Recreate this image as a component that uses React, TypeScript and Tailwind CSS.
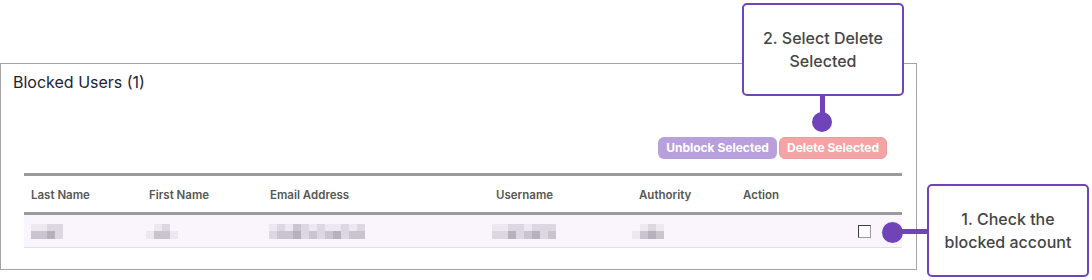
import React from "react";

const shades: Record<string, string> = {
  a: "bg-[#ece8f0]",
  b: "bg-[#dcd7e1]",
  c: "bg-[#c9c4cf]",
  d: "bg-[#b6b1bc]",
};

// blurred (pixelated) cell value, two rows of blocks
const Pixelated = ({ top, bottom, className = "" }: { top: string; bottom: string; className?: string }) => {
  return (
    <div className={"flex flex-col " + className}>
      <div className="flex">
        {top.split("").map((s, i) => (
          <div key={i} className={"w-[8px] h-[7px] " + (shades[s] ?? "bg-transparent")} />
        ))}
      </div>
      <div className="flex">
        {bottom.split("").map((s, i) => (
          <div key={i} className={"w-[8px] h-[8px] " + (shades[s] ?? "bg-transparent")} />
        ))}
      </div>
    </div>
  );
};

const columns = ["Last Name", "First Name", "Email Address", "Username", "Authority", "Action"];

const Callout = ({ text, className }: { text: React.ReactNode; className: string }) => (
  <div
    className={
      "absolute flex items-center justify-center text-center rounded-[5px] border-2 border-[#7043b9] bg-white text-[16px] font-medium leading-[23px] text-[#454545] " +
      className
    }
  >
    {text}
  </div>
);

export default function App() {
  return (
    <div
      className="relative w-[1092px] h-[280px] bg-white overflow-hidden"
      style={{ fontFamily: "Inter, 'Liberation Sans', sans-serif" }}
    >
      <div className="pt-[63px]">
        <div className="w-[917px] h-[207px] border border-[#a3a3a3] flex flex-col">
          <h2 className="pl-[12px] pt-[8px] text-[16px] leading-[20px] text-[#1d2330]">Blocked Users (1)</h2>

          <div className="ml-[23px] w-[878px] flex flex-col">
            <div className="mt-[45px] flex justify-end gap-[2px] pr-[15px]">
              <button className="h-[22px] w-[119px] rounded-[6px] bg-[#b8a0dc] text-[12px] font-bold text-white">
                Unblock Selected
              </button>
              <button className="h-[22px] w-[108px] rounded-[6px] bg-[#f4a4a4] border border-[#ee9a9a] text-[12px] font-bold text-white">
                Delete Selected
              </button>
            </div>

            <div className="mt-[14px] border-t-[3px] border-[#9b9b9b]">
              <div className="grid grid-cols-[118px_121px_226px_143px_104px_1fr] pl-[7px] pt-[3px] h-[39px] items-center border-b-[3px] border-[#9b9b9b] text-[11.5px] font-semibold text-[#575757]">
                {columns.map((c) => (
                  <div key={c}>{c}</div>
                ))}
              </div>
              <div className="grid grid-cols-[118px_121px_226px_143px_104px_1fr] pl-[7px] h-[33px] items-center bg-[#faf5fd] border-b border-[#e2dee6]">
                <Pixelated top="aabb" bottom="ccdb" className="w-fit" />
                <Pixelated top="xabx" bottom="acca" className="ml-[-3px] w-fit" />
                <Pixelated top="abacbabaabab" bottom="bccdbcbcdbcc" className="ml-[-1px] w-fit" />
                <Pixelated top="aabbabbb" bottom="bbdbcdbc" className="ml-[-4px] w-fit" />
                <Pixelated top="xaba" bottom="acdc" className="ml-[-7px] w-fit" />
                <div className="flex justify-end pr-[31px]">
                  <div className="w-[13px] h-[13px] border border-[#3c3c3c] border-r-[#9a9a9a] border-b-[#9a9a9a] bg-white" />
                </div>
              </div>
            </div>
          </div>
        </div>
      </div>

      {/* callout 2 */}
      <Callout text={<span>2. Select Delete<br />Selected</span>} className="left-[742px] top-[3px] w-[162px] h-[93px]" />
      <div className="absolute left-[820px] top-[96px] w-[5px] h-[20px] bg-[#7043b9]" />
      <div className="absolute left-[812px] top-[112px] w-[20px] h-[20px] rounded-full bg-[#7043b9]" />

      {/* callout 1 */}
      <Callout text={<span>1. Check the<br />blocked account</span>} className="left-[927px] top-[184px] w-[162px] h-[93px]" />
      <div className="absolute left-[895px] top-[229px] w-[33px] h-[5px] bg-[#7043b9]" />
      <div className="absolute left-[882px] top-[222px] w-[21px] h-[21px] rounded-full bg-[#7043b9]" />
    </div>
  );
}
